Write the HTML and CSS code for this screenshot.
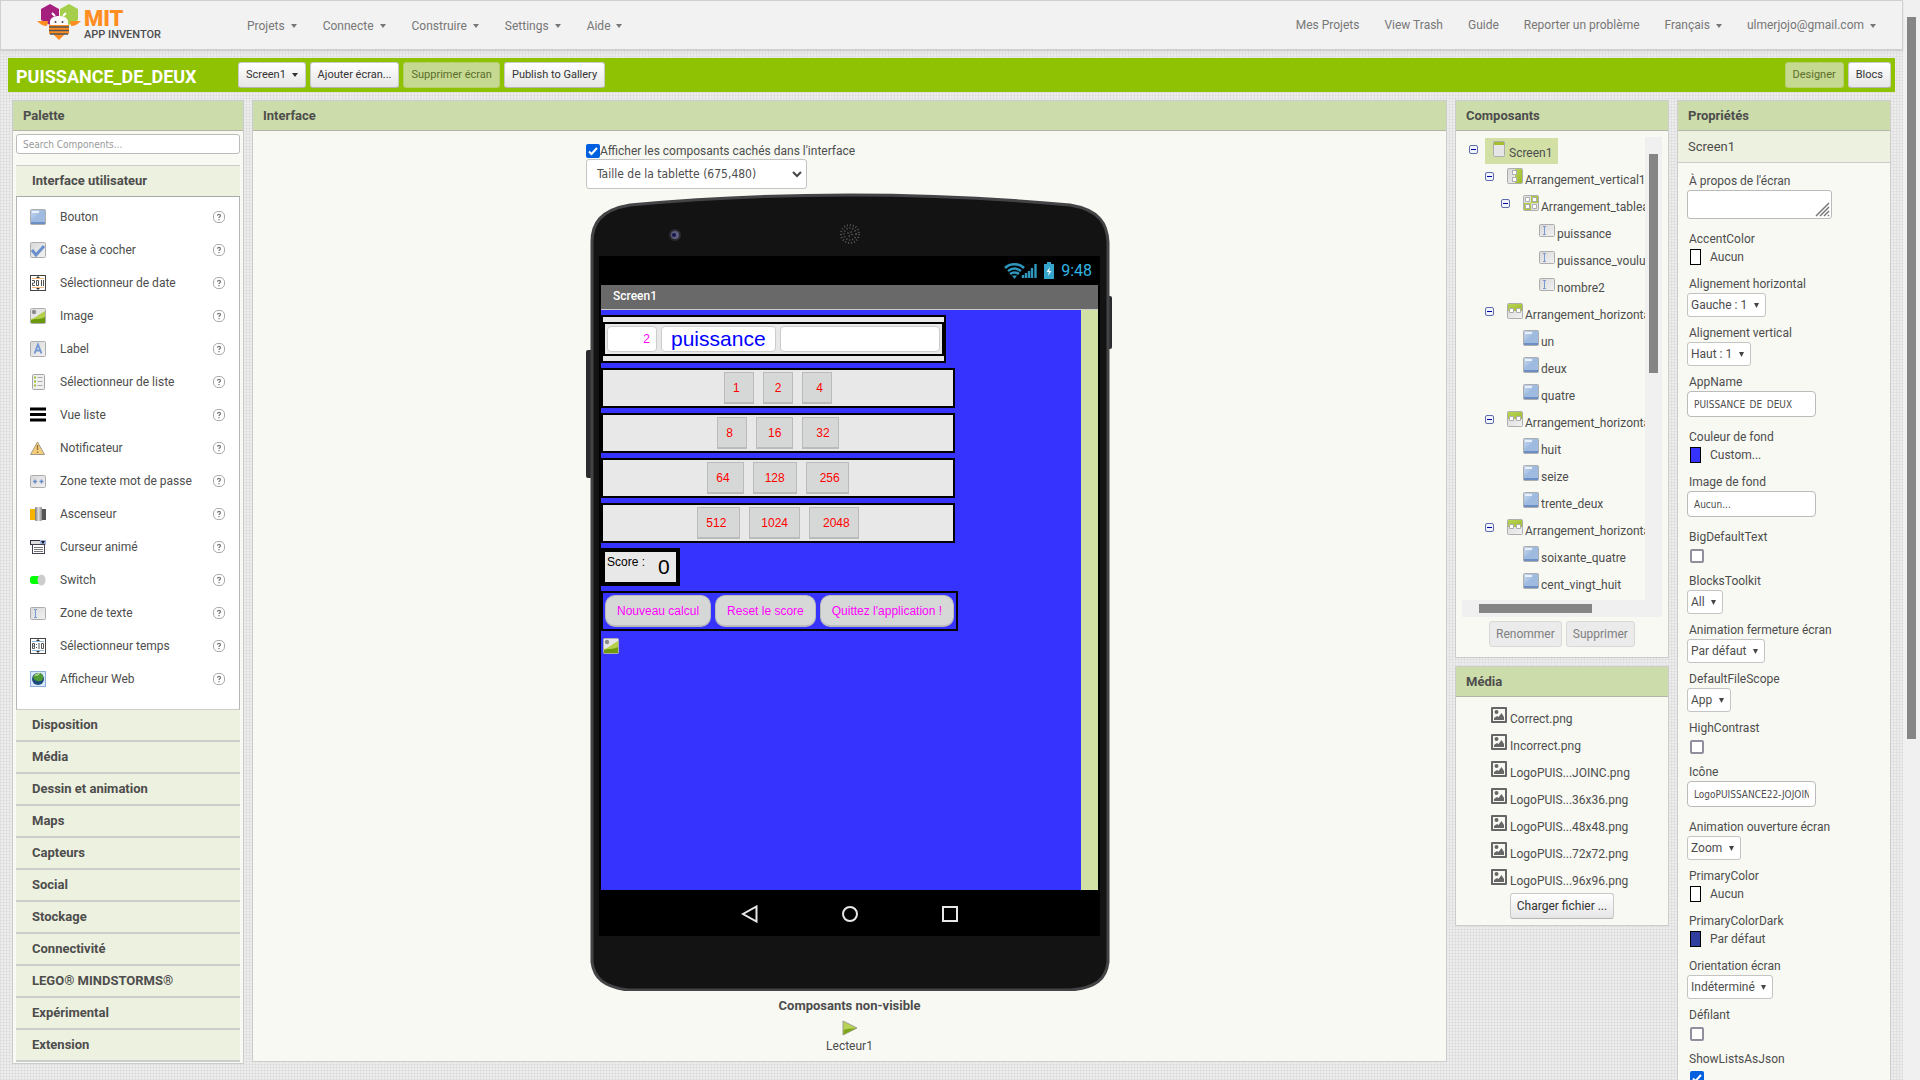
FILE: index.html
```html
<!DOCTYPE html>
<html lang="fr">
<head>
  <meta charset="UTF-8" />
  <meta name="viewport" content="width=device-width, initial-scale=1.0"/>
  <title>MIT App Inventor</title>
  <link rel="stylesheet" href="styles.css">
</head>
<body>

  <!-- icon set -->
  <svg class="defs" aria-hidden="true">
    <defs>
      <linearGradient id="gBlue" x1="0" y1="0" x2="1" y2="1">
        <stop offset="0" stop-color="#c3d5ee"/><stop offset=".5" stop-color="#a3bfe3"/><stop offset="1" stop-color="#a9c1e2"/>
      </linearGradient>
      <linearGradient id="gGrey" x1="0" y1="0" x2="1" y2="1">
        <stop offset="0" stop-color="#d8d8d8"/><stop offset="1" stop-color="#f2f2f2"/>
      </linearGradient>
      <linearGradient id="gGreen" x1="0" y1="0" x2="1" y2="1">
        <stop offset="0" stop-color="#b9d657"/><stop offset="1" stop-color="#9dbb28"/>
      </linearGradient>
      <linearGradient id="gMetal" x1="0" y1="0" x2="1" y2="0">
        <stop offset="0" stop-color="#777"/><stop offset=".5" stop-color="#ddd"/><stop offset="1" stop-color="#888"/>
      </linearGradient>
      <symbol id="i-button" viewBox="0 0 16 16">
        <rect x=".5" y=".5" width="15" height="15" rx="1" fill="url(#gBlue)" stroke="#adadad"/>
        <path d="M1 10C5 9 9 5 10 1h5v12H1z" fill="#9bb8de" opacity=".6"/>
        <rect x="2" y="2" width="7" height="2" fill="#e6effa"/>
        <path d="M1 14h14" stroke="#6b8ec4" stroke-width="2"/>
      </symbol>
      <symbol id="i-check" viewBox="0 0 16 16">
        <rect x=".5" y=".5" width="15" height="15" rx="1" fill="url(#gGrey)" stroke="#adadad"/>
        <path d="M2 8l4 5 8-9" fill="none" stroke="#6990cd" stroke-width="3"/>
      </symbol>
      <symbol id="i-date" viewBox="0 0 16 16">
        <rect x=".5" y=".5" width="15" height="15" fill="#fff" stroke="#444"/>
        <path d="M2 3.500h12M2 12.500h12" stroke="#f3b87c"/>
        <path d="M6 3l2-2 2 2zM6 13l2 2 2-2z" fill="#333"/>
        <path d="M2 5.500h2.500v2.500H2.500v2.500H5M6.500 5.500h2v5h-2zM11.500 5v6M13.500 5v6" fill="none" stroke="#555"/>
      </symbol>
      <symbol id="i-image" viewBox="0 0 16 16">
        <rect x=".5" y=".5" width="15" height="15" rx="1" fill="#e6e6e6" stroke="#adadad"/>
        <circle cx="4" cy="4" r="2.200" fill="#8c8c8c"/>
        <path d="M1 11C6 10 9 6 15 3v12H1z" fill="#b4d04a"/>
        <path d="M1 12c6-2 8 0 14-3v6H1z" fill="#6c9a0c"/>
      </symbol>
      <symbol id="i-label" viewBox="0 0 16 16">
        <rect x=".5" y=".5" width="15" height="15" rx="1" fill="url(#gGrey)" stroke="#adadad"/>
        <path d="M4.500 12.500L8 3.500l3.500 9M5.500 9.500h5" fill="none" stroke="#7297d2" stroke-width="1.800"/>
      </symbol>
      <symbol id="i-list" viewBox="0 0 16 16">
        <rect x="2.500" y=".5" width="12" height="15" rx="1" fill="#efefef" stroke="#a5a5a5"/>
        <path d="M4 3.500h2M4 7.500h2M4 11.500h2" stroke="#9dc02e" stroke-width="2"/>
        <path d="M7.500 3.500h5M7.500 7.500h5M7.500 11.500h5" stroke="#aaa"/>
      </symbol>
      <symbol id="i-listview" viewBox="0 0 16 16">
        <path d="M0 2h16M0 7.500h16M0 13h16" stroke="#000" stroke-width="3"/>
      </symbol>
      <symbol id="i-notifier" viewBox="0 0 16 16">
        <path d="M7.500 2L14.500 14.500H.5z" fill="#f6cf7c" stroke="#a19a87"/>
        <path d="M7.500 5v5M7.500 11.500v1.500" stroke="#987338" stroke-width="1.400"/>
      </symbol>
      <symbol id="i-password" viewBox="0 0 16 16">
        <rect x=".5" y="2.500" width="15" height="12" rx="1" fill="url(#gGrey)" stroke="#adadad"/>
        <path d="M3 8.500h4M5 6.500v4M9.500 8.500h4M11.500 6.500v4" stroke="#6c8fcb" stroke-width="1.500"/>
      </symbol>
      <symbol id="i-slider" viewBox="0 0 16 16">
        <rect y="3" width="6" height="11" fill="#f5b400"/>
        <rect x="11" y="3" width="5" height="11" fill="#555"/>
        <rect x="5" y="1" width="7" height="14" rx="1" fill="url(#gMetal)"/>
      </symbol>
      <symbol id="i-spinner" viewBox="0 0 16 16">
        <rect x=".5" y="1.500" width="15" height="4" fill="#ddd" stroke="#334"/>
        <rect x="10" y="1" width="6" height="5" fill="#9fb6e3"/>
        <path d="M11 2h4l-2 3z" fill="#112"/>
        <rect x="2.500" y="5.500" width="12" height="9" fill="#fff" stroke="#445"/>
        <path d="M4 8.500h9M4 10.500h9M4 12.500h9" stroke="#777"/>
      </symbol>
      <symbol id="i-switch" viewBox="0 0 16 16">
        <rect y="4" width="12" height="8" rx="3" fill="#0f0"/>
        <ellipse cx="11.500" cy="8" rx="4" ry="5.500" fill="#ccc"/>
      </symbol>
      <symbol id="i-textbox" viewBox="0 0 16 16">
        <rect x=".5" y="2.500" width="15" height="12" rx="1" fill="url(#gGrey)" stroke="#adadad"/>
        <path d="M4 4.500h3M4 12.500h3M5.500 4.500v8" stroke="#7b9bd0" fill="none"/>
      </symbol>
      <symbol id="i-time" viewBox="0 0 16 16">
        <rect x=".5" y=".5" width="15" height="15" fill="#fff" stroke="#444"/>
        <path d="M2 3.500h12M2 12.500h12" stroke="#8fb8d8"/>
        <path d="M6 3l2-2 2 2zM6 13l2 2 2-2z" fill="#333"/>
        <path d="M2.500 5.500h2v5h-2zM2.500 8h2M6.500 6v1M6.500 9v1M9 5v6M11.500 5.500h2v5h-2z" fill="none" stroke="#555"/>
      </symbol>
      <symbol id="i-web" viewBox="0 0 16 16">
        <rect x=".5" y=".5" width="15" height="15" fill="#d9e8f8" stroke="#8fb0dc"/>
        <circle cx="8" cy="8" r="6" fill="#1c4a7c"/>
        <path d="M3 6c2-4 7-5 9-3 2 3 1 6-1 7-3 1-7 0-8-4z" fill="#4f9b36"/>
        <path d="M4 5c2-3 4-3 6-3-1 3-3 3-6 3z" fill="#a6cf7a"/>
      </symbol>
      <symbol id="i-screen" viewBox="0 0 16 16">
        <rect x="2.500" y=".5" width="11" height="15" rx="1" fill="#e6e6e6" stroke="#adadad"/>
        <rect x="3" y="1" width="10" height="3" fill="#a3bf2d"/>
      </symbol>
      <symbol id="i-vertical" viewBox="0 0 16 16">
        <rect x=".5" y=".5" width="15" height="15" rx="1" fill="url(#gGrey)" stroke="#adadad"/>
        <path d="M8 1h7v14H8z" fill="url(#gGreen)"/>
        <rect x="5.500" y="2.500" width="4" height="4" fill="#fff" stroke="#adadad"/>
        <rect x="5.500" y="9.500" width="4" height="4" fill="#fff" stroke="#adadad"/>
      </symbol>
      <symbol id="i-table" viewBox="0 0 16 16">
        <rect x=".5" y=".5" width="15" height="15" rx="1" fill="#e2e2e2" stroke="#adadad"/>
        <path d="M8 1h7v7H1v7h7z" fill="url(#gGreen)"/>
        <path d="M2.500 2.500h4v4h-4zM9.500 2.500h4v4h-4zM2.500 9.500h4v4h-4zM9.500 9.500h4v4h-4z" fill="#fff" stroke="#adadad"/>
      </symbol>
      <symbol id="i-horizontal" viewBox="0 0 16 16">
        <rect x=".5" y=".5" width="15" height="15" rx="1" fill="url(#gGrey)" stroke="#adadad"/>
        <path d="M1 1h14v7H1z" fill="url(#gGreen)"/>
        <path d="M2.500 5.500h4v4h-4zM9.500 5.500h4v4h-4z" fill="#fff" stroke="#adadad"/>
      </symbol>
      <symbol id="i-media" viewBox="0 0 16 16">
        <path fill-rule="evenodd" d="M1 0h14a1 1 0 0 1 1 1v14a1 1 0 0 1-1 1H1a1 1 0 0 1-1-1V1a1 1 0 0 1 1-1zM2 2v12h12V2z" fill="#666"/>
        <circle cx="5.500" cy="5" r="2" fill="#666"/>
        <path d="M3 13v-2l3-2 1.500 1L10.500 6 13 10v3z" fill="#666"/>
      </symbol>
      <symbol id="i-play" viewBox="0 0 16 16">
        <path d="M1 1l14 7L1 15z" fill="#b6d356" stroke="#9a9f8c"/>
        <path d="M1.500 10c5-2 8-1 13-2L1.500 14.500z" fill="#7ea51c"/>
      </symbol>
      <symbol id="i-help" viewBox="0 0 12 12">
        <rect x=".5" y=".5" width="11" height="11" rx="4.500" fill="#fff" stroke="#aaa"/>
        <path d="M4.500 4.800c0-2 3-2 3 0 0 1-1.500 1-1.500 2.200M6 8v1.200" fill="none" stroke="#777" stroke-width="1.200"/>
      </symbol>
      <symbol id="i-minus" viewBox="0 0 9 9">
        <rect x=".5" y=".5" width="8" height="8" rx="1.500" fill="#f2f4fc" stroke="#5f6cad"/>
        <path d="M2 4.500h5" stroke="#0000b0"/>
      </symbol>
    </defs>
  </svg>

  <div class="page">

    <header class="header">
      <a class="logo" href="#">
        <svg width="44" height="38" viewBox="0 0 44 38" aria-hidden="true">
          <path d="M13 1l9 5v11l-9 5-9-5V6z" fill="#a5207d"/>
          <path d="M32 1l9 5v11l-9 5-9-5V6z" fill="#a5ce4a"/>
          <path d="M0 18h11l-1 5c-4 0-7-2-10-5zM44 18H33l1 5c4 0 7-2 10-5z" fill="#ff8d22"/>
          <path d="M13 18c1-4 5-5 9-5s8 1 9 5v8H13z" fill="#fafafa"/>
          <path d="M18 13l-3-3M26 13l3-3" stroke="#fff" stroke-width="2"/>
          <circle cx="18.500" cy="19" r="1" fill="#444"/><circle cx="25.500" cy="19" r="1" fill="#444"/>
          <path d="M12 22h20v9h-4l-6 6-6-6h-4z" fill="#ff8d22"/>
          <path d="M12 24h20M12 27.500h20M13 31h18" stroke="#505458" stroke-width="1.500"/>
        </svg>
        <span class="logo-text">
          <span class="logo-mit">MIT</span>
          <span class="logo-name">APP INVENTOR</span>
        </span>
      </a>
      <nav class="menu">
        <button>Projets <i class="caret"></i></button>
        <button>Connecte <i class="caret"></i></button>
        <button>Construire <i class="caret"></i></button>
        <button>Settings <i class="caret"></i></button>
        <button>Aide <i class="caret"></i></button>
      </nav>
      <nav class="links">
        <a href="#">Mes Projets</a>
        <a href="#">View Trash</a>
        <a href="#">Guide</a>
        <a href="#">Reporter un problème</a>
        <button>Français <i class="caret"></i></button>
        <button>ulmerjojo@gmail.com <i class="caret"></i></button>
      </nav>
    </header>

    <div class="toolbar">
      <h1>PUISSANCE_DE_DEUX</h1>
      <button class="btn">Screen1 <i class="caret"></i></button>
      <button class="btn">Ajouter écran...</button>
      <button class="btn" disabled>Supprimer écran</button>
      <button class="btn">Publish to Gallery</button>
      <span class="spacer"></span>
      <button class="btn" disabled>Designer</button>
      <button class="btn">Blocs</button>
    </div>

    <main class="columns">

      <section class="panel palette">
        <h2>Palette</h2>
        <input class="search" type="text" placeholder="Search Components..." aria-label="Search Components">
        <button class="category first">Interface utilisateur</button>
        <ul class="components">
          <li><svg class="icon"><use href="#i-button"/></svg><span>Bouton</span><svg class="help"><use href="#i-help"/></svg></li>
          <li><svg class="icon"><use href="#i-check"/></svg><span>Case à cocher</span><svg class="help"><use href="#i-help"/></svg></li>
          <li><svg class="icon"><use href="#i-date"/></svg><span>Sélectionneur de date</span><svg class="help"><use href="#i-help"/></svg></li>
          <li><svg class="icon"><use href="#i-image"/></svg><span>Image</span><svg class="help"><use href="#i-help"/></svg></li>
          <li><svg class="icon"><use href="#i-label"/></svg><span>Label</span><svg class="help"><use href="#i-help"/></svg></li>
          <li><svg class="icon"><use href="#i-list"/></svg><span>Sélectionneur de liste</span><svg class="help"><use href="#i-help"/></svg></li>
          <li><svg class="icon"><use href="#i-listview"/></svg><span>Vue liste</span><svg class="help"><use href="#i-help"/></svg></li>
          <li><svg class="icon"><use href="#i-notifier"/></svg><span>Notificateur</span><svg class="help"><use href="#i-help"/></svg></li>
          <li><svg class="icon"><use href="#i-password"/></svg><span>Zone texte mot de passe</span><svg class="help"><use href="#i-help"/></svg></li>
          <li><svg class="icon"><use href="#i-slider"/></svg><span>Ascenseur</span><svg class="help"><use href="#i-help"/></svg></li>
          <li><svg class="icon"><use href="#i-spinner"/></svg><span>Curseur animé</span><svg class="help"><use href="#i-help"/></svg></li>
          <li><svg class="icon"><use href="#i-switch"/></svg><span>Switch</span><svg class="help"><use href="#i-help"/></svg></li>
          <li><svg class="icon"><use href="#i-textbox"/></svg><span>Zone de texte</span><svg class="help"><use href="#i-help"/></svg></li>
          <li><svg class="icon"><use href="#i-time"/></svg><span>Sélectionneur temps</span><svg class="help"><use href="#i-help"/></svg></li>
          <li><svg class="icon"><use href="#i-web"/></svg><span>Afficheur Web</span><svg class="help"><use href="#i-help"/></svg></li>
        </ul>
        <button class="category">Disposition</button>
        <button class="category">Média</button>
        <button class="category">Dessin et animation</button>
        <button class="category">Maps</button>
        <button class="category">Capteurs</button>
        <button class="category">Social</button>
        <button class="category">Stockage</button>
        <button class="category">Connectivité</button>
        <button class="category">LEGO® MINDSTORMS®</button>
        <button class="category">Expérimental</button>
        <button class="category">Extension</button>
      </section>

      <section class="panel viewer">
        <h2>Interface</h2>
        <div class="preview">
          <label class="show-hidden"><input class="tick" type="checkbox" checked>Afficher les composants cachés dans l'interface</label>
          <select class="size-select" aria-label="Taille de l'écran">
            <option>Taille de la tablette (675,480)</option>
          </select>

          <div class="phone">
            <svg class="phone-frame" viewBox="0 0 527 801" aria-hidden="true">
              <rect x="0" y="160" width="8" height="128" rx="2" fill="#2c2c2e"/>
              <rect x="519" y="106" width="7" height="53" rx="2" fill="#2c2c2e"/>
              <path d="M6 52C6 34 14 20 44 15 120 8 200 5 264 5s144 3 220 10c30 5 37 19 38 37v720c-2 17-12 26-38 28H42C18 797 8 788 6 772z" fill="#131313" stroke="#434446" stroke-width="3"/>
              <circle cx="89" cy="45" r="6" fill="#2b2b31"/><circle cx="89" cy="45" r="4" fill="#5d5d80"/><circle cx="88" cy="45" r="2" fill="#16164a"/>
              <circle cx="264" cy="44" r="9" fill="none" stroke="#555" stroke-width="2" stroke-dasharray="1 2"/>
              <circle cx="264" cy="44" r="6" fill="none" stroke="#555" stroke-width="2" stroke-dasharray="1 2"/>
              <circle cx="264" cy="44" r="2" fill="none" stroke="#555" stroke-width="2" stroke-dasharray="1 2"/>
            </svg>
            <div class="screen">
              <div class="status">
                <svg width="33" height="18" viewBox="0 0 33 18" aria-hidden="true">
                  <path d="M1 6c5-5 14-5 19 0M4 9c4-3 9-3 13 0M6 12c3-2 6-2 9 0" fill="none" stroke="#2f96bd" stroke-width="2.500"/>
                  <path d="M8 13.500h5L10.500 17z" fill="#2f96bd"/>
                  <path d="M19 16v-3M22 16v-5M25 16V9M28 16V6M31.500 16V2" stroke="#2f96bd" stroke-width="2.400"/>
                </svg>
                <svg width="10" height="17" viewBox="0 0 10 17" aria-hidden="true">
                  <path d="M3 0h4v2h3v15H0V2h3z" fill="#36a5ce"/>
                  <path d="M6 5L2.500 10H5l-1 4 3.500-5H5z" fill="#fff"/>
                </svg>
                <span>9:48</span>
              </div>
              <div class="title-bar">Screen1</div>
              <div class="form">
                <div class="form-body">
                  <div class="arr vertical">
                    <div class="arr table">
                      <input class="tb tb-num" type="text" value="2" aria-label="nombre2">
                      <input class="tb tb-word" type="text" value="puissance" aria-label="puissance">
                      <input class="tb tb-answer" type="text" aria-label="puissance_voulue">
                    </div>
                  </div>
                  <div class="arr keys"><button>1</button><button>2</button><button>4</button></div>
                  <div class="arr keys"><button>8</button><button>16</button><button>32</button></div>
                  <div class="arr keys"><button>64</button><button>128</button><button>256</button></div>
                  <div class="arr keys"><button>512</button><button>1024</button><button>2048</button></div>
                  <div class="score"><span>Score :</span><span class="points">0</span></div>
                  <div class="arr actions">
                    <button>Nouveau calcul</button>
                    <button>Reset le score</button>
                    <button>Quittez l'application !</button>
                  </div>
                  <svg class="icon picture"><use href="#i-image"/></svg>
                </div>
                <div class="form-edge"></div>
              </div>
              <div class="navbar">
                <svg width="18" height="18" viewBox="0 0 18 18" aria-hidden="true"><path d="M15.500 1.500v15L2 9z" fill="none" stroke="#e8e8e8" stroke-width="2"/></svg>
                <svg width="18" height="18" viewBox="0 0 18 18" aria-hidden="true"><circle cx="9" cy="9" r="7" fill="none" stroke="#e8e8e8" stroke-width="2"/></svg>
                <svg width="18" height="18" viewBox="0 0 18 18" aria-hidden="true"><rect x="2" y="2" width="14" height="14" fill="none" stroke="#e8e8e8" stroke-width="2"/></svg>
              </div>
            </div>
          </div>

          <div class="non-visible">
            <strong>Composants non-visible</strong>
            <svg class="icon"><use href="#i-play"/></svg>
            <span>Lecteur1</span>
          </div>
        </div>
      </section>

      <div class="side">
        <section class="panel">
          <h2>Composants</h2>
          <div class="scroller">
            <ul class="tree">
              <li>
                <button class="toggle" aria-label="Replier"><svg><use href="#i-minus"/></svg></button><span class="node selected"><svg class="icon"><use href="#i-screen"/></svg>Screen1</span>
                <ul>
                  <li>
                    <button class="toggle" aria-label="Replier"><svg><use href="#i-minus"/></svg></button><span class="node"><svg class="icon"><use href="#i-vertical"/></svg>Arrangement_vertical1</span>
                    <ul>
                      <li>
                        <button class="toggle" aria-label="Replier"><svg><use href="#i-minus"/></svg></button><span class="node"><svg class="icon"><use href="#i-table"/></svg>Arrangement_tableau1</span>
                        <ul>
                          <li><span class="node leaf"><svg class="icon"><use href="#i-textbox"/></svg>puissance</span></li>
                          <li><span class="node leaf"><svg class="icon"><use href="#i-textbox"/></svg>puissance_voulue</span></li>
                          <li><span class="node leaf"><svg class="icon"><use href="#i-textbox"/></svg>nombre2</span></li>
                        </ul>
                      </li>
                    </ul>
                  </li>
                  <li>
                    <button class="toggle" aria-label="Replier"><svg><use href="#i-minus"/></svg></button><span class="node"><svg class="icon"><use href="#i-horizontal"/></svg>Arrangement_horizontal1</span>
                    <ul>
                      <li><span class="node leaf"><svg class="icon"><use href="#i-button"/></svg>un</span></li>
                      <li><span class="node leaf"><svg class="icon"><use href="#i-button"/></svg>deux</span></li>
                      <li><span class="node leaf"><svg class="icon"><use href="#i-button"/></svg>quatre</span></li>
                    </ul>
                  </li>
                  <li>
                    <button class="toggle" aria-label="Replier"><svg><use href="#i-minus"/></svg></button><span class="node"><svg class="icon"><use href="#i-horizontal"/></svg>Arrangement_horizontal2</span>
                    <ul>
                      <li><span class="node leaf"><svg class="icon"><use href="#i-button"/></svg>huit</span></li>
                      <li><span class="node leaf"><svg class="icon"><use href="#i-button"/></svg>seize</span></li>
                      <li><span class="node leaf"><svg class="icon"><use href="#i-button"/></svg>trente_deux</span></li>
                    </ul>
                  </li>
                  <li>
                    <button class="toggle" aria-label="Replier"><svg><use href="#i-minus"/></svg></button><span class="node"><svg class="icon"><use href="#i-horizontal"/></svg>Arrangement_horizontal3</span>
                    <ul>
                      <li><span class="node leaf"><svg class="icon"><use href="#i-button"/></svg>soixante_quatre</span></li>
                      <li><span class="node leaf"><svg class="icon"><use href="#i-button"/></svg>cent_vingt_huit</span></li>
                    </ul>
                  </li>
                </ul>
              </li>
            </ul>
            <div class="bar-v"><div class="thumb"></div></div>
            <div class="bar-h"><div class="thumb"></div></div>
          </div>
          <div class="tree-actions">
            <button class="btn big" disabled>Renommer</button>
            <button class="btn big" disabled>Supprimer</button>
          </div>
        </section>

        <section class="panel media">
          <h2>Média</h2>
          <ul>
            <li><svg class="icon"><use href="#i-media"/></svg>Correct.png</li>
            <li><svg class="icon"><use href="#i-media"/></svg>Incorrect.png</li>
            <li><svg class="icon"><use href="#i-media"/></svg>LogoPUIS...JOINC.png</li>
            <li><svg class="icon"><use href="#i-media"/></svg>LogoPUIS...36x36.png</li>
            <li><svg class="icon"><use href="#i-media"/></svg>LogoPUIS...48x48.png</li>
            <li><svg class="icon"><use href="#i-media"/></svg>LogoPUIS...72x72.png</li>
            <li><svg class="icon"><use href="#i-media"/></svg>LogoPUIS...96x96.png</li>
          </ul>
          <button class="btn big">Charger fichier ...</button>
        </section>
      </div>

      <section class="panel properties">
        <h2>Propriétés</h2>
        <h3>Screen1</h3>
        <form>
          <div class="prop prop-area"><label for="about">À propos de l'écran</label><textarea id="about"></textarea></div>
          <div class="prop"><label for="accent">AccentColor</label><button type="button" id="accent" class="color"><i class="swatch"></i>Aucun</button></div>
          <div class="prop"><label for="alignH">Alignement horizontal</label><select id="alignH"><option>Gauche : 1</option></select></div>
          <div class="prop"><label for="alignV">Alignement vertical</label><select id="alignV"><option>Haut : 1</option></select></div>
          <div class="prop prop-text"><label for="appName">AppName</label><input id="appName" type="text" value="PUISSANCE_DE_DEUX"></div>
          <div class="prop"><label for="bgColor">Couleur de fond</label><button type="button" id="bgColor" class="color"><i class="swatch custom"></i>Custom...</button></div>
          <div class="prop prop-text"><label for="bgImage">Image de fond</label><input id="bgImage" type="text" value="Aucun..."></div>
          <div class="prop"><label for="bigText">BigDefaultText</label><input class="tick" id="bigText" type="checkbox"></div>
          <div class="prop"><label for="toolkit">BlocksToolkit</label><select id="toolkit"><option>All</option></select></div>
          <div class="prop"><label for="closeAnim">Animation fermeture écran</label><select id="closeAnim"><option>Par défaut</option></select></div>
          <div class="prop"><label for="fileScope">DefaultFileScope</label><select id="fileScope"><option>App</option></select></div>
          <div class="prop"><label for="contrast">HighContrast</label><input class="tick" id="contrast" type="checkbox"></div>
          <div class="prop prop-text"><label for="appIcon">Icône</label><input id="appIcon" type="text" value="LogoPUISSANCE22-JOJOINC.png"></div>
          <div class="prop"><label for="openAnim">Animation ouverture écran</label><select id="openAnim"><option>Zoom</option></select></div>
          <div class="prop"><label for="primary">PrimaryColor</label><button type="button" id="primary" class="color"><i class="swatch"></i>Aucun</button></div>
          <div class="prop"><label for="primaryDark">PrimaryColorDark</label><button type="button" id="primaryDark" class="color"><i class="swatch dark"></i>Par défaut</button></div>
          <div class="prop"><label for="orientation">Orientation écran</label><select id="orientation"><option>Indéterminé</option></select></div>
          <div class="prop"><label for="scrollable">Défilant</label><input class="tick" id="scrollable" type="checkbox"></div>
          <div class="prop"><label for="listsJson">ShowListsAsJson</label><input class="tick" id="listsJson" type="checkbox" checked></div>
        </form>
      </section>

    </main>
  </div>

  <div class="page-scroll"><div class="thumb"></div></div>

</body>
</html>
```

FILE: styles.css
```css
* {
  box-sizing: border-box;
}

body {
  margin: 0;
  height: 100vh;
  overflow: hidden;
  display: flex;
  font-family: Roboto, sans-serif;
  font-size: 12px;
  line-height: 18px;
  color: #4d4d4d;
  background: #f0f0f0;
}

button, input, select, textarea {
  font: inherit;
  color: inherit;
}

button {
  cursor: pointer;
}

ul {
  list-style: none;
  margin: 0;
  padding: 0;
}

.defs {
  position: absolute;
  width: 0;
  height: 0;
}

.icon {
  width: 16px;
  height: 16px;
}

.caret {
  display: inline-block;
  border: 3px solid transparent;
  border-top: 4px solid currentColor;
  border-bottom: 0;
  margin-left: 3px;
  vertical-align: middle;
}

.page {
  flex: 1;
  min-width: 0;
  background-color: #ececec;
  background-image:
    repeating-linear-gradient(0deg, rgba(0,0,0,0.04) 0 1px, transparent 1px 3px),
    repeating-linear-gradient(90deg, rgba(0,0,0,0.04) 0 1px, transparent 1px 3px);
}

.page-scroll {
  width: 17px;
  padding: 17px 4px;
}

.thumb {
  background: #858585;
}

.page-scroll .thumb {
  height: 69%;
}

/* header */
.header {
  display: flex;
  align-items: center;
  height: 50px;
  padding: 0 26px 0 36px;
  background: #f2f2f2;
  border: 1px solid #d0d0d0;
  box-shadow: 0 1px 2px rgba(0,0,0,0.1);
  color: #777;
}

.logo {
  display: flex;
  gap: 3px;
  width: 210px;
  margin-top: -6px;
  text-decoration: none;
}

.logo-text {
  display: flex;
  flex-direction: column;
  padding-top: 6px;
}

.logo-mit {
  font-size: 22px;
  font-weight: 900;
  line-height: 19px;
  color: #ff8d22;
}

.logo-name {
  font-size: 11px;
  font-weight: 500;
  line-height: 14px;
  color: #4d4d4d;
}

.menu, .links {
  display: flex;
  align-items: center;
}

.menu {
  gap: 26px;
  padding-top: 1px;
}

.links {
  gap: 25px;
  margin-left: auto;
}

.header button {
  padding: 0;
  border: 0;
  background: none;
}

.links a {
  color: inherit;
  text-decoration: none;
}

/* project bar */
.toolbar {
  display: flex;
  align-items: center;
  gap: 4px;
  height: 34px;
  margin: 8px;
  padding: 0 4px 0 8px;
  background: #8fc202;
}

.toolbar h1 {
  width: 218px;
  margin: 0;
  padding-top: 3px;
  font-size: 18px;
  font-weight: 700;
  color: #fff;
}

.spacer {
  flex: 1;
}

.btn {
  height: 26px;
  padding: 0 7px;
  border: 1px solid #c9c9c9;
  border-bottom-color: #b5b5b5;
  border-radius: 3px;
  background: linear-gradient(#fff, #e6e6e6);
  font-size: 11px;
  line-height: 16px;
  color: #333;
}

.btn.big {
  padding: 0 6px;
  font-size: 12px;
}

.btn:disabled {
  color: #808080;
  background: #ebebeb;
  border-color: #d9d9d9;
}

.toolbar .btn:disabled {
  color: #5b6e2c;
  background: #c5d990;
  border-color: #b4cf70;
}

/* columns */
.columns {
  display: flex;
  align-items: flex-start;
  gap: 8px;
  padding: 0 12px;
}

.panel {
  border: 1px solid #ccc;
  background: #f8f9f3;
}

.panel h2 {
  margin: 0;
  padding: 6px 10px 5px;
  font-size: 13px;
  font-weight: 700;
  line-height: 18px;
  background: #ccdcaa;
  border-bottom: 1px solid #b3b5a6;
}

.palette {
  display: flex;
  flex-direction: column;
  flex: 0 0 232px;
  padding-bottom: 1px;
}

.search {
  margin: 3px 3px 11px;
  height: 20px;
  padding: 0 6px;
  border: 1px solid #bbb;
  border-radius: 3px;
  background: #fff;
  font-family: "DejaVu Sans Condensed", "DejaVu Sans", sans-serif;
  font-size: 10px;
}

.search::placeholder {
  color: #999;
}

.category {
  margin: 0 3px;
  height: 32px;
  padding: 0 16px;
  border: 0;
  border-bottom: 2px solid #ccc;
  background: #edf1df;
  font-size: 13px;
  font-weight: 700;
  text-align: left;
}

.category.first {
  border-top: 1px solid #ccc;
  border-bottom: 1px solid #aaa;
}

.components {
  margin: 0 3px;
  padding: 3px 14px 14px 13px;
  border: 1px solid #b5b5b5;
  border-top: 0;
  border-bottom-color: #ccc;
  background: #fff;
}

.components li {
  display: flex;
  align-items: center;
  height: 33px;
}

.components span {
  flex: 1;
  padding-left: 14px;
}

.help {
  width: 12px;
  height: 12px;
}

/* viewer */
.viewer {
  flex: 1;
  min-width: 0;
}

.preview {
  display: flex;
  flex-direction: column;
  align-items: flex-start;
  width: 527px;
  margin: 0 auto;
  padding: 12px 0 6px;
}

.show-hidden {
  display: flex;
  align-items: center;
  height: 16px;
}

.tick {
  appearance: none;
  width: 14px;
  height: 14px;
  margin: 0;
  border: 2px solid #8f8f9d;
  border-radius: 2px;
  background: #fff;
}

.tick:checked {
  border-color: #0060df;
  background: #0060df url("data:image/svg+xml,%3Csvg xmlns='http://www.w3.org/2000/svg' viewBox='0 0 10 10'%3E%3Cpath d='M1 5.500l2.500 2.500L9 2' fill='none' stroke='white' stroke-width='2'/%3E%3C/svg%3E");
}

select {
  appearance: none;
  border: 1px solid #c4c4c4;
  border-radius: 3px;
}

.size-select {
  width: 221px;
  height: 30px;
  padding: 0 10px;
  font-family: "DejaVu Sans Condensed", "DejaVu Sans", sans-serif;
  background: #fff url("data:image/svg+xml,%3Csvg xmlns='http://www.w3.org/2000/svg' width='10' height='10'%3E%3Cpath d='M1 3l4 4 4-4' fill='none' stroke='%23444' stroke-width='2'/%3E%3C/svg%3E") no-repeat right 4px center;
}

.phone {
  position: relative;
  width: 527px;
  margin-top: 1px;
  padding: 66px 13px 55px;
}

.phone-frame {
  position: absolute;
  inset: 0;
  width: 100%;
  height: 100%;
}

.screen {
  position: relative;
  padding: 0 2px;
  background: #000;
}

.status {
  display: flex;
  align-items: center;
  justify-content: flex-end;
  gap: 7px;
  height: 29px;
  padding-right: 6px;
  font-size: 16px;
  color: #33b5e5;
}

.title-bar {
  height: 25px;
  padding: 2px 12px;
  border-bottom: 1px solid #ccc;
  background: #696969;
  font-weight: 500;
  color: #fff;
}

.form {
  display: flex;
  height: 580px;
  font-family: "Liberation Sans", Arial, sans-serif;
}

.form-body {
  flex: 1;
  display: flex;
  flex-direction: column;
  align-items: flex-start;
  gap: 5px;
  padding-top: 5px;
  background: #3733ff;
}

.form-edge {
  width: 17px;
  background: #d2e0a6;
}

.arr {
  display: flex;
  border: 2px solid #000;
  background: #e8e8e8;
}

.vertical {
  width: 345px;
  padding: 5px 0;
}

.table {
  flex: 1;
  min-width: 0;
  gap: 4px;
  height: 34px;
  padding: 2px;
}

.tb {
  min-width: 0;
  height: 26px;
  padding: 0 6px;
  border: 1px solid #ccc;
  border-radius: 4px;
  background: #fff;
}

.tb-num {
  width: 50px;
  text-align: right;
  color: #f0f;
}

.tb-word {
  width: 115px;
  padding: 0 9px;
  font-size: 21px;
  color: #00f;
}

.tb-answer {
  flex: 1;
}

.keys {
  justify-content: center;
  gap: 9px;
  width: 354px;
  height: 40px;
  padding: 2px;
}

.keys button {
  padding: 0 11px;
  border: 1px solid #bbb;
  border-bottom-width: 2px;
  background: #d6d8d7;
  color: #f00;
}

.keys button:first-child {
  padding: 0 13px 0 8px;
}

.keys button:last-child {
  padding: 0 8px 0 13px;
}

.score {
  display: flex;
  gap: 13px;
  height: 38px;
  padding: 1px 6px 0 2px;
  border: 4px solid #000;
  background: #e8e8e8;
  color: #000;
}

.points {
  font-size: 21px;
  line-height: 28px;
}

.actions {
  gap: 4px;
  height: 40px;
  padding: 2px;
  background: none;
}

.actions button {
  padding: 0 11px;
  border: 1px solid #bbb;
  border-bottom-width: 2px;
  border-radius: 10px;
  background: #d6d8d7;
  color: #f0f;
}

.picture {
  margin: 2px;
}

.navbar {
  display: flex;
  align-items: center;
  justify-content: center;
  gap: 82px;
  height: 46px;
  padding-top: 2px;
}

.non-visible {
  display: flex;
  flex-direction: column;
  align-items: center;
  align-self: center;
  padding-top: 6px;
}

.non-visible strong {
  font-size: 13px;
}

.non-visible .icon {
  margin: 5px 0 1px;
}

/* component tree */
.side {
  flex: 0 0 214px;
}

.scroller {
  display: grid;
  grid-template-columns: 1fr 17px;
  grid-template-rows: 463px 17px;
  margin: 6px 6px 4px;
  background: #f0f0f0;
}

.tree {
  overflow: hidden;
  padding: 1px 0 0 7px;
  background: #f8f9f3;
  white-space: nowrap;
}

.tree ul {
  padding-left: 16px;
}

.toggle {
  width: 9px;
  height: 9px;
  margin-right: 7px;
  padding: 0;
  border: 0;
  background: none;
  vertical-align: top;
}

.toggle svg {
  display: block;
  width: 9px;
  height: 9px;
  margin-top: 7px;
}

.node {
  display: inline-block;
  height: 26px;
  margin-bottom: 1px;
  padding: 3px 6px 0;
  line-height: 23px;
  vertical-align: top;
}

.node .icon {
  margin-right: 2px;
}

.leaf {
  margin-left: 16px;
}

.selected {
  background: #d2e0a6;
}

.bar-v {
  padding: 17px 4px;
}

.bar-v .thumb {
  height: 51%;
}

.bar-h {
  padding: 4px 17px;
}

.bar-h .thumb {
  width: 76%;
  height: 9px;
}

.tree-actions {
  display: flex;
  justify-content: center;
  gap: 4px;
  padding-bottom: 10px;
}

.media {
  margin-top: 8px;
  padding-bottom: 6px;
  text-align: center;
}

.media h2, .media ul {
  text-align: left;
}

.media ul {
  padding: 7px 0 0 35px;
}

.media li {
  height: 27px;
  padding-top: 3px;
  line-height: 23px;
}

.media .icon {
  margin-right: 3px;
}

/* properties */
.properties {
  flex: 0 0 214px;
}

.properties h3 {
  margin: 0;
  padding: 7px 10px 6px;
  font-size: 13px;
  font-weight: 400;
  background: #edf1df;
  border-bottom: 1px solid #ccc;
}

.properties form {
  padding: 9px;
}

.prop {
  display: flex;
  flex-direction: column;
  align-items: flex-start;
  margin-bottom: 7px;
}

.prop label {
  padding-left: 2px;
}

.prop-text, .prop-area {
  margin-bottom: 11px;
}

.prop textarea {
  width: 145px;
  height: 29px;
  border: 1px solid #bbb;
  border-radius: 3px;
  resize: none;
  background: #fff url("data:image/svg+xml,%3Csvg xmlns='http://www.w3.org/2000/svg' width='15' height='15'%3E%3Cpath d='M1 14L14 1M5 14l9-9M9 14l5-5M13 14l1-1' fill='none' stroke='%23777' stroke-width='1.500'/%3E%3C/svg%3E") no-repeat right 1px bottom 1px;
}

.prop select {
  height: 24px;
  padding: 0 17px 0 3px;
  background: #fff url("data:image/svg+xml,%3Csvg xmlns='http://www.w3.org/2000/svg' width='5' height='5'%3E%3Cpath d='M0 0h5L2.500 5z' fill='%23444'/%3E%3C/svg%3E") no-repeat right 6px center;
}

.prop-text input {
  width: 129px;
  height: 26px;
  padding: 0 6px;
  border: 1px solid #bbb;
  border-radius: 4px;
  background: #fff;
  font-family: "DejaVu Sans Condensed", "DejaVu Sans", sans-serif;
  font-size: 10px;
}

.color {
  display: flex;
  align-items: flex-start;
  gap: 9px;
  height: 20px;
  padding: 0 3px;
  border: 0;
  background: none;
}

.swatch {
  width: 11px;
  height: 16px;
  margin-top: 1px;
  border: 1px solid #000;
  background: #fff;
}

.custom {
  background: #3733ff;
}

.dark {
  background: #303f9f;
}

.prop .tick {
  margin: 3px 3px 2px;
}
```
